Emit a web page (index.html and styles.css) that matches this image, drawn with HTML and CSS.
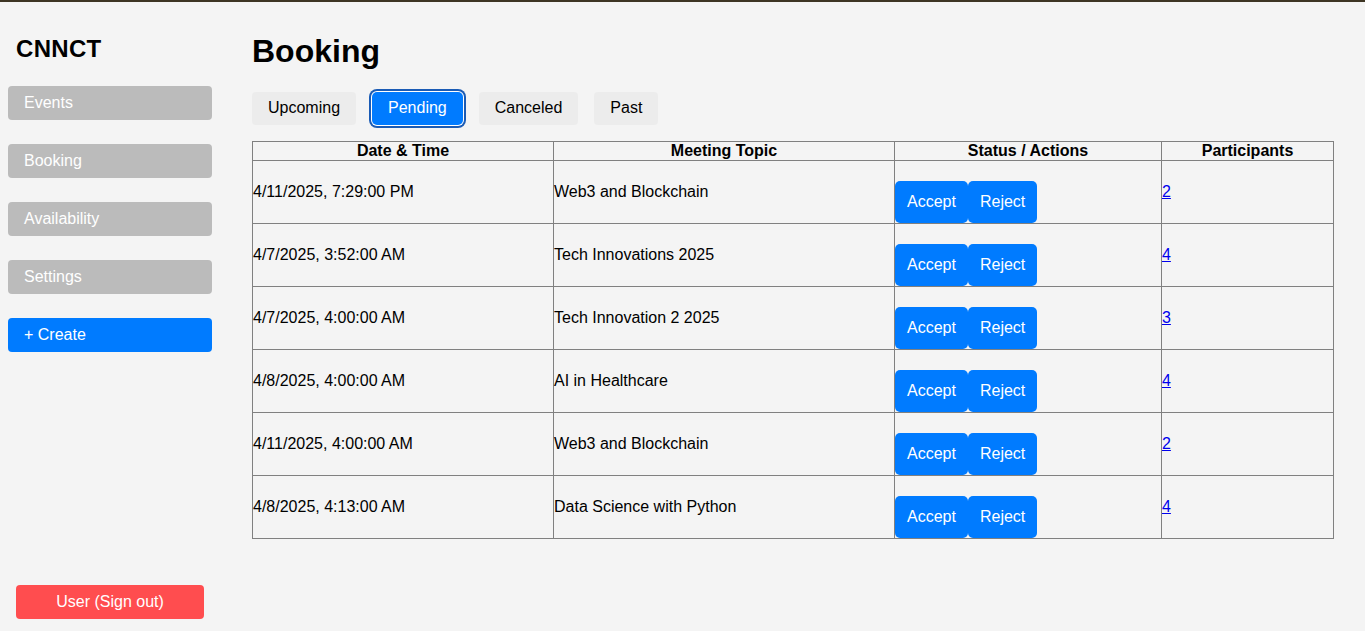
FILE: index.html
```html
<!DOCTYPE html>
<html lang="en">
<head>
<meta charset="utf-8">
<title>CNNCT - Booking</title>
<link rel="stylesheet" href="styles.css">
</head>
<body>
<aside class="sidebar">
  <h2 class="logo">CNNCT</h2>
  <nav class="nav">
    <a class="nav-item">Events</a>
    <a class="nav-item">Booking</a>
    <a class="nav-item">Availability</a>
    <a class="nav-item">Settings</a>
    <a class="nav-item create">+ Create</a>
  </nav>
  <button class="signout">User (Sign out)</button>
</aside>
<main class="main">
  <h1 class="title">Booking</h1>
  <div class="tabs">
    <button class="tab">Upcoming</button>
    <button class="tab active">Pending</button>
    <button class="tab">Canceled</button>
    <button class="tab">Past</button>
  </div>
  <table class="bookings">
    <colgroup>
      <col class="c1"><col class="c2"><col class="c3"><col class="c4">
    </colgroup>
    <thead>
      <tr><th>Date &amp; Time</th><th>Meeting Topic</th><th>Status / Actions</th><th>Participants</th></tr>
    </thead>
    <tbody>
      <tr><td>4/11/2025, 7:29:00 PM</td><td>Web3 and Blockchain</td><td><div class="status"></div><div class="actions"><button class="act">Accept</button><button class="act">Reject</button></div></td><td><a href="#" class="plink">2</a></td></tr>
      <tr><td>4/7/2025, 3:52:00 AM</td><td>Tech Innovations 2025</td><td><div class="status"></div><div class="actions"><button class="act">Accept</button><button class="act">Reject</button></div></td><td><a href="#" class="plink">4</a></td></tr>
      <tr><td>4/7/2025, 4:00:00 AM</td><td>Tech Innovation 2 2025</td><td><div class="status"></div><div class="actions"><button class="act">Accept</button><button class="act">Reject</button></div></td><td><a href="#" class="plink">3</a></td></tr>
      <tr><td>4/8/2025, 4:00:00 AM</td><td>AI in Healthcare</td><td><div class="status"></div><div class="actions"><button class="act">Accept</button><button class="act">Reject</button></div></td><td><a href="#" class="plink">4</a></td></tr>
      <tr><td>4/11/2025, 4:00:00 AM</td><td>Web3 and Blockchain</td><td><div class="status"></div><div class="actions"><button class="act">Accept</button><button class="act">Reject</button></div></td><td><a href="#" class="plink">2</a></td></tr>
      <tr><td>4/8/2025, 4:13:00 AM</td><td>Data Science with Python</td><td><div class="status"></div><div class="actions"><button class="act">Accept</button><button class="act">Reject</button></div></td><td><a href="#" class="plink">4</a></td></tr>
    </tbody>
  </table>
</main>
</body>
</html>
```
FILE: styles.css
```css
* { box-sizing: border-box; }
html, body { margin: 0; padding: 0; }
body {
  font-family: "Liberation Sans", Arial, sans-serif;
  font-size: 16px;
  background: #f4f4f4;
  color: #000;
  border-top: 2px solid #3d3523;
  display: flex;
  min-height: 100vh;
}
.sidebar {
  width: 220px;
  flex: 0 0 220px;
  padding: 8px;
  display: flex;
  flex-direction: column;
  height: calc(100vh - 2px);
}
.logo {
  font-size: 24px;
  font-weight: bold;
  margin: 25px 8px 23px;
  line-height: 27.6px;
  letter-spacing: 0.3px;
}
.nav {
  display: flex;
  flex-direction: column;
  gap: 24px;
}
.nav-item {
  display: block;
  background: #bbbbbb;
  color: #fff;
  border-radius: 4px;
  padding: 8px 16px;
  line-height: 18px;
  height: 34px;
  cursor: pointer;
}
.nav-item.create { background: #007bff; }
.signout {
  margin: auto 8px 4px;
  background: #ff4d4f;
  color: #fff;
  border: none;
  border-radius: 4px;
  height: 34px;
  font-family: inherit;
  font-size: 16px;
  padding: 0;
}
.main {
  flex: 1;
  padding: 10px 31px 10px 32px;
}
.title {
  font-size: 32px;
  font-weight: bold;
  margin: 21px 0 22px;
  line-height: 36.8px;
}
.tabs {
  display: flex;
  gap: 16px;
  margin-bottom: 16px;
}
.tab {
  font-family: inherit;
  font-size: 16px;
  background: #ececec;
  color: #000;
  border: none;
  border-radius: 4px;
  padding: 0 16px;
  height: 33px;
  line-height: 18px;
}
.tab.active {
  background: #007bff;
  color: #fff;
  box-shadow: 0 0 0 1px #fff, 0 0 0 3px #1a5bb5;
  border-radius: 5px;
}
.bookings {
  width: 100%;
  border-collapse: collapse;
  table-layout: fixed;
}
.c1 { width: 301px; }
.c2 { width: 341px; }
.c3 { width: 267px; }
.bookings th, .bookings td {
  border: 1px solid #808080;
  padding: 0;
  vertical-align: middle;
  line-height: 18px;
}
.bookings th { font-weight: bold; text-align: center; }
.bookings td { text-align: left; }
.status { height: 20px; }
.actions { display: flex; }
.act {
  font-family: inherit;
  font-size: 16px;
  background: #007bff;
  color: #fff;
  border: none;
  border-radius: 5px;
  padding: 0 12px;
  height: 42px;
  line-height: 18px;
}
.plink { color: #0000ee; text-decoration: underline; }
```
